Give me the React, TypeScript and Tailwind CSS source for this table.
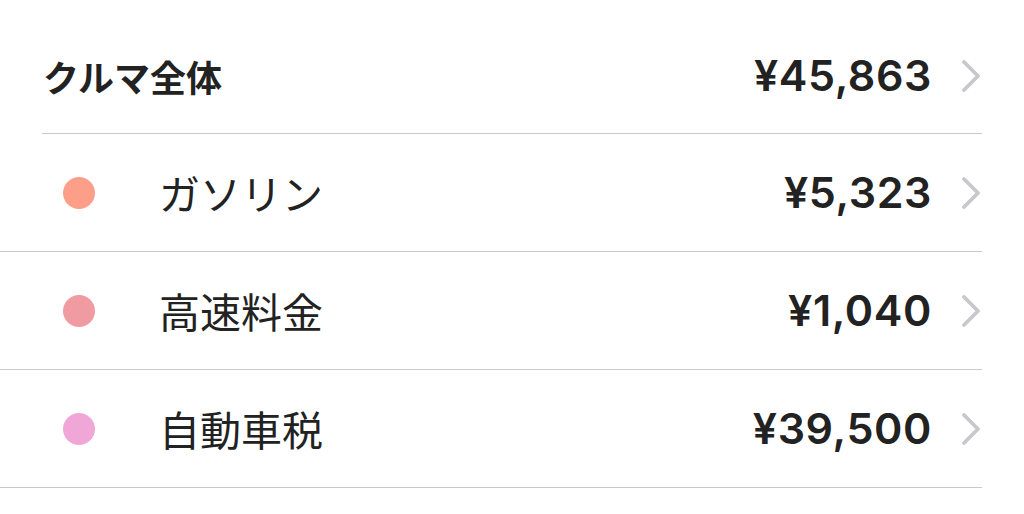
const items = [
  { label: 'ガソリン', amount: '¥5,323', dot: 'bg-[#fd9f88]' },
  { label: '高速料金', amount: '¥1,040', dot: 'bg-[#ef9ba1]' },
  { label: '自動車税', amount: '¥39,500', dot: 'bg-[#f0a7d7]' },
]

function Chevron() {
  return (
    <svg className="w-[20px] h-[32px] text-[#c7c7cc]" viewBox="0 0 20 32" fill="none" stroke="currentColor">
      <path d="M3 2l14 14-14 14" strokeWidth={3.8} strokeLinecap="round" strokeLinejoin="round" />
    </svg>
  )
}

export default function App() {
  return (
    <div className="w-[1024px] h-[514px] bg-white text-[#222] pr-[42px] overflow-hidden">
      <div className="ml-[42px] h-[134px] border-b border-[#c8c8c8] flex items-center pt-[18px]">
        <span className="flex-1 pl-[1px] text-[36px] font-semibold font-['Noto_Sans_CJK_JP',sans-serif]">
          クルマ全体
        </span>
        <span className="text-[43px] font-semibold font-['Inter',sans-serif] tracking-[0.6px]">¥45,863</span>
        <span className="ml-[29px] mr-[1px]">
          <Chevron />
        </span>
      </div>
      {items.map((item) => (
        <div key={item.label} className="h-[118px] border-b border-[#c8c8c8] flex items-center">
          <span className={`ml-[63px] w-[32px] h-[32px] rounded-full ${item.dot}`} />
          <span className="ml-[64px] flex-1 text-[41px] font-['Noto_Sans_CJK_JP',sans-serif]">
            {item.label}
          </span>
          <span className="text-[43px] font-semibold font-['Inter',sans-serif] tracking-[0.6px]">{item.amount}</span>
          <span className="ml-[29px] mr-[1px]">
            <Chevron />
          </span>
        </div>
      ))}
    </div>
  )
}
